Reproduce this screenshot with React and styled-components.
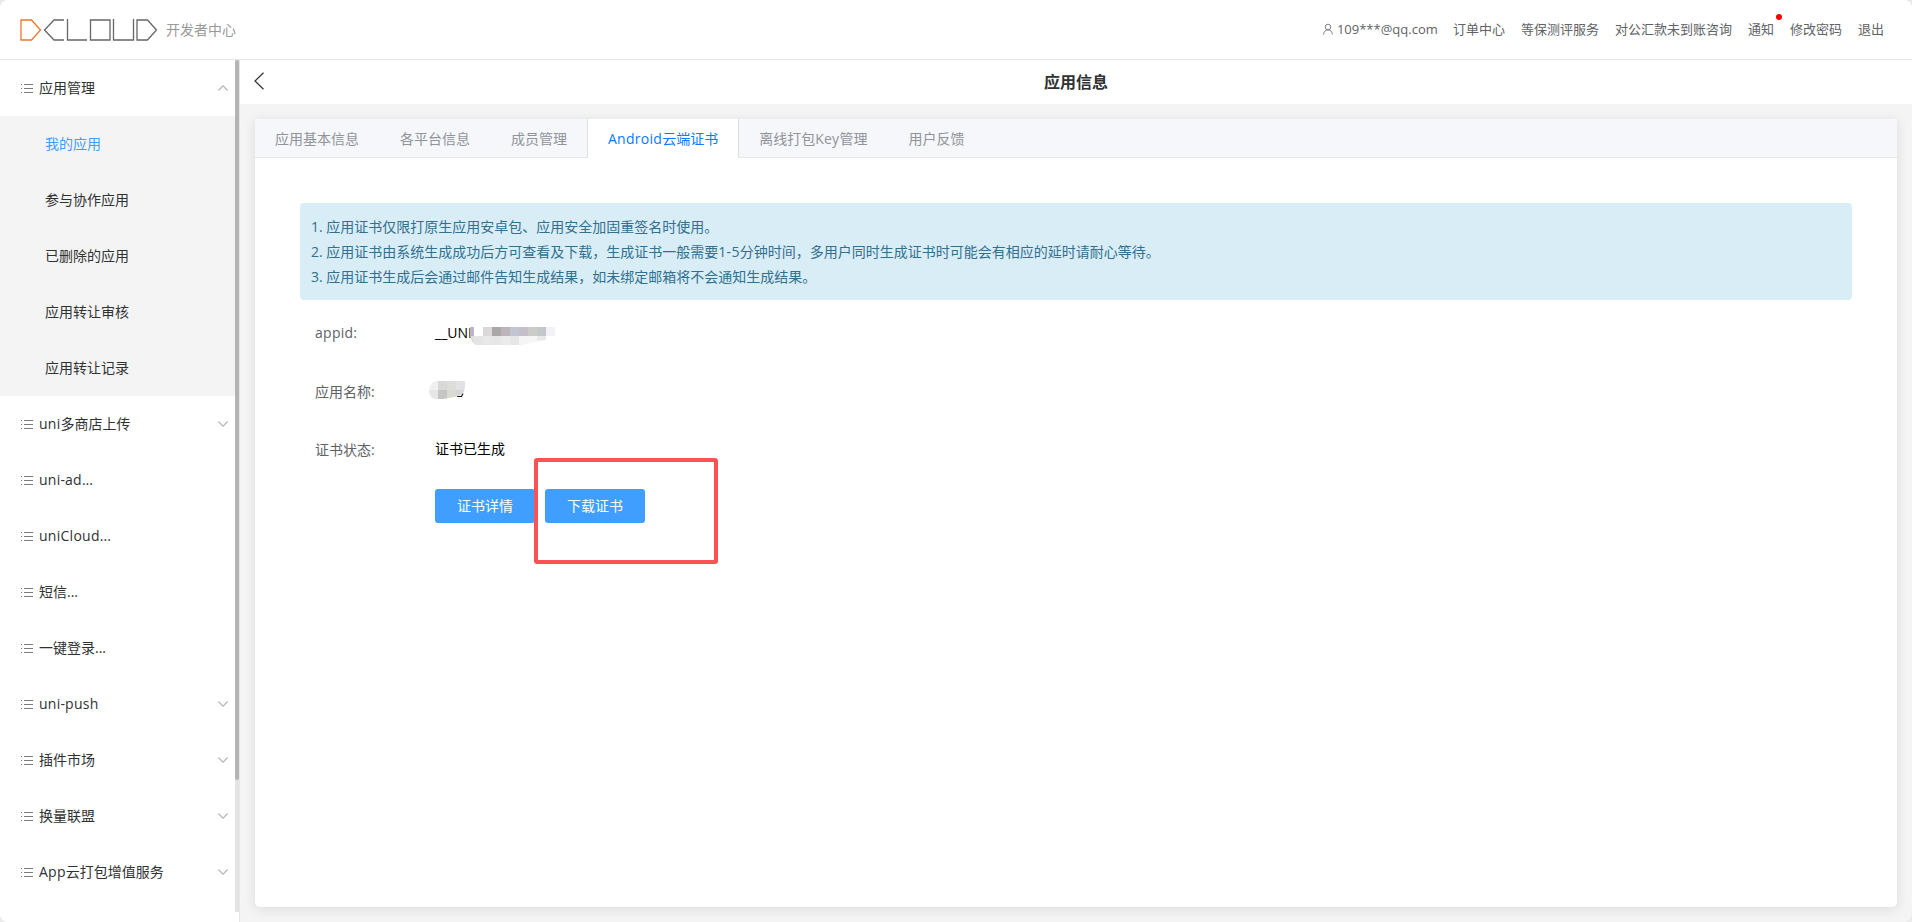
import React from 'react';
import styled, { createGlobalStyle } from 'styled-components';

const GlobalStyle = createGlobalStyle`
  * {
    box-sizing: border-box;
  }
  body {
    margin: 0;
    background: #e9e9e9;
    font-family: "Open Sans", "Noto Sans CJK SC", sans-serif;
    font-size: 14px;
    color: #303133;
  }
`;

const Page = styled.div`
  height: 922px;
  display: flex;
  flex-direction: column;
  overflow: hidden;
  border-radius: 8px;
  background: #f4f4f4;
`;

const Header = styled.header`
  height: 60px;
  flex: none;
  display: flex;
  align-items: center;
  justify-content: space-between;
  padding: 0 28px 0 20px;
  background: #fff;
  border-bottom: 1px solid #e6e6e6;
`;

const Brand = styled.div`
  display: flex;
  align-items: center;
  gap: 8px;
  color: #999;

  span {
    padding-bottom: 2px;
  }
`;

const TopNav = styled.nav`
  display: flex;
  align-items: center;
  gap: 16px;
  padding-bottom: 2px;
  font-size: 13px;
  line-height: 20px;
  color: #606266;
`;

const NavItem = styled.a`
  position: relative;
  display: flex;
  align-items: center;
  gap: 4px;
  white-space: nowrap;
`;

const Account = styled.span`
  width: 100px;
`;

const Dot = styled.i`
  position: absolute;
  top: -5px;
  right: -8px;
  width: 6px;
  height: 6px;
  border-radius: 50%;
  background: #f00;
`;

const Body = styled.div`
  flex: 1;
  display: flex;
  min-height: 0;
`;

const Sidebar = styled.aside`
  width: 240px;
  flex: none;
  display: flex;
  background: #fff;
  border-right: 1px solid #e6e6e6;
`;

const Menu = styled.ul`
  flex: 1;
  margin: 0;
  padding: 0;
  list-style: none;
`;

const MenuRow = styled.li`
  height: 56px;
  display: flex;
  align-items: center;
  padding: 0 7px 0 21px;

  .label {
    flex: 1;
    margin-left: 6px;
    padding-bottom: 2px;
  }
`;

const SubMenu = styled.ul`
  margin: 0;
  padding: 0;
  list-style: none;
  background: #f4f4f4;
`;

const SubItem = styled.li`
  height: 56px;
  line-height: 56px;
  padding-left: 45px;
  color: ${({ $active }) => ($active ? '#409eff' : '#303133')};
`;

const ScrollTrack = styled.div`
  width: 4px;
  height: 852px;
  background: #e4e4e4;
`;

const ScrollThumb = styled.div`
  height: 720px;
  border-radius: 2px;
  background: #b4b4b4;
`;

const Main = styled.main`
  flex: 1;
  min-width: 0;
  display: flex;
  flex-direction: column;
`;

const TitleBar = styled.div`
  height: 44px;
  flex: none;
  display: grid;
  grid-template-columns: 26px 1fr 26px;
  align-items: center;
  padding: 0 14px 2px;
  background: #fff;

  h1 {
    margin: 0;
    text-align: center;
    font-size: 16px;
    font-weight: 700;
  }
`;

const CardArea = styled.div`
  flex: 1;
  display: flex;
  padding: 15px;
`;

const Card = styled.section`
  flex: 1;
  overflow: hidden;
  border-radius: 0 0 5px 5px;
  background: #fff;
  box-shadow: 0 2px 12px 0 rgba(0, 0, 0, 0.1);
`;

const Tabs = styled.div`
  height: 39px;
  display: flex;
  background: #f5f7fa;
  border-bottom: 1px solid #e4e7ed;
`;

const Tab = styled.div`
  height: ${({ $active }) => ($active ? '39px' : '38px')};
  line-height: 39px;
  margin-left: -1px;
  padding: 0 20px;
  border: solid ${({ $active }) => ($active ? '#dcdfe6' : 'transparent')};
  border-width: 0 1px;
  background: ${({ $active }) => ($active ? '#fff' : 'transparent')};
  color: ${({ $active }) => ($active ? '#0a7aff' : '#909399')};
  white-space: nowrap;
`;

const Latin = styled.span`
  letter-spacing: 0.27px;
`;

const Content = styled.div`
  padding: 45px;
`;

const Notice = styled.ol`
  margin: 0;
  padding: 11px;
  list-style: none;
  border-radius: 4px;
  background: #d9edf7;
  color: #31708f;
  line-height: 25px;
`;

const Form = styled.div`
  margin-top: 3px;
  padding-left: 15px;
`;

const Field = styled.div`
  height: 58px;
  display: grid;
  grid-template-columns: 120px 1fr;
  align-items: center;
  color: #000;
`;

const Label = styled.span`
  padding-top: 1px;
  color: #606266;
`;

const Value = styled.div`
  position: relative;
  height: 58px;
  display: flex;
  align-items: center;
`;

// Pixelated cover laid over a private value
const Cover = styled.svg`
  position: absolute;
  left: ${({ $left }) => $left}px;
  top: ${({ $top }) => $top}px;
`;

const Actions = styled.div`
  position: relative;
  width: fit-content;
  display: flex;
  gap: 10px;
  margin: 12px 0 0 120px;
`;

const Button = styled.button`
  width: 100px;
  height: 34px;
  padding: 0 0 2px;
  border: 0;
  border-radius: 3px;
  background: #409eff;
  color: #fff;
  font: inherit;
`;

const Highlight = styled.div`
  position: absolute;
  left: 99px;
  top: -31px;
  width: 184px;
  height: 106px;
  border: 4px solid #fd5254;
  border-radius: 3px;
`;

const Logo = () => (
  <svg width="138" height="22" viewBox="0 0 138 22" fill="none" stroke="#666" strokeWidth="1.3">
    <path stroke="#ee7530" d="M1 1h10.500l9 10-9 10H1z" />
    <path d="M44 1H34l-9.500 10 9.500 10h10" />
    <path d="M47.500 0v21H67" />
    <path d="M70.500 1h19.500v20H70.500z" />
    <path d="M93.500 0v21H113.500V0" />
    <path d="M117 1h10.500l9 10-9 10H117z" />
  </svg>
);

const UserIcon = () => (
  <svg width="10" height="12" viewBox="0 0 10 12" fill="none" stroke="#707277" strokeWidth="0.9">
    <circle cx="5" cy="4" r="2.800" />
    <path d="M.6 11.500C.8 8.700 2.400 6.900 5 6.900s4.200 1.800 4.400 4.600" />
  </svg>
);

const ListIcon = () => (
  <svg width="12" height="10" viewBox="0 0 12 10" stroke="#777a80" strokeWidth="1">
    <path d="M0 1.500h1M0 5.500h1M0 9.500h1M3 1.500h9M3 5.500h9M3 9.500h9" />
  </svg>
);

const Chevron = ({ up }) => (
  <svg width="10" height="6" viewBox="0 0 10 6" fill="none" stroke="#b4b6ba" strokeWidth="1.2">
    <path d={up ? 'M.4 5.500L5 .8l4.600 4.700' : 'M.4 .5L5 5.200 9.600 .5'} />
  </svg>
);

const BackIcon = () => (
  <svg width="11" height="18" viewBox="0 0 11 18" fill="none" stroke="#303133" strokeWidth="1.2">
    <path d="M9.500 .8L1 9l8.500 8.200" />
  </svg>
);

const CELL = 9;

const Cells = ({ rows, offset = 0 }) =>
  rows.map((row, y) =>
    row.map((fill, x) => (
      <rect key={`${x}-${y}`} x={offset + x * CELL} y={y * CELL} width={CELL} height={CELL} fill={fill} />
    ))
  );

const appidCells = [
  ['#b9b4c8', '#fff', '#dcd8da', '#a9a7a9', '#bbb5ba', '#c1c5d1', '#c5bfca', '#cbcbc7', '#c3c6ca', '#f1f2f8'],
  ['#dedede', '#e4e4e4', '#e8e8e8', '#e6e6e6', '#eaecec', '#e6e6e6', '#f5f5f7', '#f5f5f5', '#ebe8e8', '#fff'],
];

const nameCells = [
  ['#f0f0f0', '#d8d8d8', '#dcded9', '#e2e2e4'],
  ['#e6e6e6', '#c5c6c4', '#d9dad2', '#d5d6d8'],
];

const AppidCover = () => (
  <Cover $left={35} $top={24} width="85" height="18">
    <clipPath id="appid-cover">
      <path d="M0 0H85V12Q68 13 54 18H6Q1 16 0 8z" />
    </clipPath>
    <g clipPath="url(#appid-cover)">
      <Cells rows={appidCells} offset={-5} />
    </g>
  </Cover>
);

const NameCover = () => (
  <Cover $left={-6} $top={20} width="36" height="18">
    <path d="M28 15.500h4.500l1.500-3" fill="none" stroke="#111" strokeWidth="1.2" />
    <clipPath id="name-cover">
      <path d="M7 0H36V7Q34 15 26 16L14 18H6Q0 16 0 9 1 2 7 0z" />
    </clipPath>
    <g clipPath="url(#name-cover)">
      <Cells rows={nameCells} />
    </g>
  </Cover>
);

// Latin runs are set slightly wider than the Chinese text around them
const Mixed = ({ children }) =>
  children
    .split(/([A-Za-z]+)/)
    .map((part, i) => (i % 2 ? <Latin key={i}>{part}</Latin> : part));

const menu = [
  {
    label: '应用管理',
    open: true,
    children: ['我的应用', '参与协作应用', '已删除的应用', '应用转让审核', '应用转让记录'],
  },
  { label: 'uni多商店上传', children: [] },
  { label: 'uni-ad...' },
  { label: 'uniCloud...' },
  { label: '短信...' },
  { label: '一键登录...' },
  { label: 'uni-push', children: [] },
  { label: '插件市场', children: [] },
  { label: '换量联盟', children: [] },
  { label: 'App云打包增值服务', children: [] },
];

const tabs = ['应用基本信息', '各平台信息', '成员管理', 'Android云端证书', '离线打包Key管理', '用户反馈'];

const App = () => (
  <Page>
    <GlobalStyle />
    <Header>
      <Brand>
        <Logo />
        <span>开发者中心</span>
      </Brand>
      <TopNav>
        <NavItem><UserIcon /><Account>109***@qq.com</Account></NavItem>
        <NavItem>订单中心</NavItem>
        <NavItem>等保测评服务</NavItem>
        <NavItem>对公汇款未到账咨询</NavItem>
        <NavItem>通知<Dot /></NavItem>
        <NavItem>修改密码</NavItem>
        <NavItem>退出</NavItem>
      </TopNav>
    </Header>
    <Body>
      <Sidebar>
        <Menu>
          {menu.map((item) => (
            <React.Fragment key={item.label}>
              <MenuRow>
                <ListIcon />
                <span className="label"><Mixed>{item.label}</Mixed></span>
                {item.children && <Chevron up={item.open} />}
              </MenuRow>
              {item.open && (
                <SubMenu>
                  {item.children.map((child, i) => (
                    <SubItem key={child} $active={i === 0}>{child}</SubItem>
                  ))}
                </SubMenu>
              )}
            </React.Fragment>
          ))}
        </Menu>
        <ScrollTrack><ScrollThumb /></ScrollTrack>
      </Sidebar>
      <Main>
        <TitleBar>
          <BackIcon />
          <h1>应用信息</h1>
        </TitleBar>
        <CardArea>
          <Card>
            <Tabs>
              {tabs.map((tab, i) => (
                <Tab key={tab} $active={i === 3}><Mixed>{tab}</Mixed></Tab>
              ))}
            </Tabs>
            <Content>
              <Notice>
                <li>1. 应用证书仅限打原生应用安卓包、应用安全加固重签名时使用。</li>
                <li>2. 应用证书由系统生成成功后方可查看及下载，生成证书一般需要<Latin>1-5</Latin>分钟时间，多用户同时生成证书时可能会有相应的延时请耐心等待。</li>
                <li>3. 应用证书生成后会通过邮件告知生成结果，如未绑定邮箱将不会通知生成结果。</li>
              </Notice>
              <Form>
                <Field>
                  <Label><Latin>appid:</Latin></Label>
                  <Value>__UNI<AppidCover /></Value>
                </Field>
                <Field>
                  <Label>应用名称:</Label>
                  <Value><NameCover /></Value>
                </Field>
                <Field>
                  <Label>证书状态:</Label>
                  <Value>证书已生成</Value>
                </Field>
                <Actions>
                  <Button>证书详情</Button>
                  <Button>下载证书</Button>
                  <Highlight />
                </Actions>
              </Form>
            </Content>
          </Card>
        </CardArea>
      </Main>
    </Body>
  </Page>
);

export default App;
